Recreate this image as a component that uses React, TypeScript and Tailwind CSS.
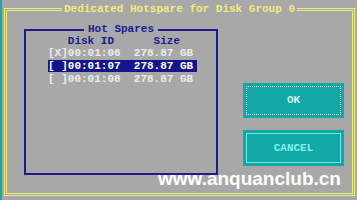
const mono = { fontFamily: '"Liberation Mono", "DejaVu Sans Mono", monospace' };

const rows = [
  { text: "[X]00:01:06  278.87 GB", selected: false },
  { text: "[ ]00:01:07  278.87 GB", selected: true },
  { text: "[ ]00:01:08  278.87 GB", selected: false },
];

export default function App() {
  return (
    <div
      className="relative flex h-[200px] w-[357px] overflow-hidden bg-[#a8a8a8] font-bold text-[11px]"
      style={mono}
    >
      <div className="w-[2px] bg-[#14aca4]" />
      <div className="flex flex-1 pb-[4px] pl-[2px] pr-[2px] pt-[4px]">
        <fieldset className="m-0 flex-1 border-[3px] border-double border-[#eeee7c] p-0">
          <legend className="mx-auto px-[2px] leading-[11px] text-[#eeee7c]">
            Dedicated Hotspare for Disk Group 0
          </legend>

          <div className="flex pl-[17px] pt-[9px]">
            <fieldset className="m-0 h-[151px] w-[194px] border-2 border-[#1c1c8c] p-0">
              <legend className="mx-auto px-[4px] leading-[11px] text-[#1c1c8c]">
                Hot Spares
              </legend>
              <div className="pl-[22px]">
                <div className="h-[12px] whitespace-pre leading-[12px] text-[#1c1c8c]">
                  {"   Disk ID      Size"}
                </div>
                {rows.map((row) => (
                  <div
                    key={row.text}
                    className={
                      row.selected
                        ? "my-[1px] h-[12px] w-[149px] whitespace-pre bg-[#14148c] leading-[12px] text-white"
                        : "h-[12px] w-[149px] whitespace-pre leading-[12px] text-[#ececec]"
                    }
                  >
                    {row.text}
                  </div>
                ))}
              </div>
            </fieldset>

            <div className="ml-[25px] flex w-[101px] flex-col gap-[12px] pt-[59px]">
              <button className="h-[35px] bg-[#12a8a8] p-[3px]">
                <div className="flex h-full items-center justify-center border border-dotted border-[#c8eeee] text-[#d8f4f4]">
                  OK
                </div>
              </button>
              <button className="h-[36px] bg-[#12a8a8] p-[3px]">
                <div className="flex h-full items-center justify-center border border-[#70e8e4] text-[#80f0ec]">
                  CANCEL
                </div>
              </button>
            </div>
          </div>
        </fieldset>
      </div>

      <div
        className="absolute left-[158px] top-[169px] text-[19px] leading-[20px] font-bold text-white"
        style={{ fontFamily: '"Liberation Sans", Arial, sans-serif' }}
      >
        www.anquanclub.cn
      </div>
    </div>
  );
}
